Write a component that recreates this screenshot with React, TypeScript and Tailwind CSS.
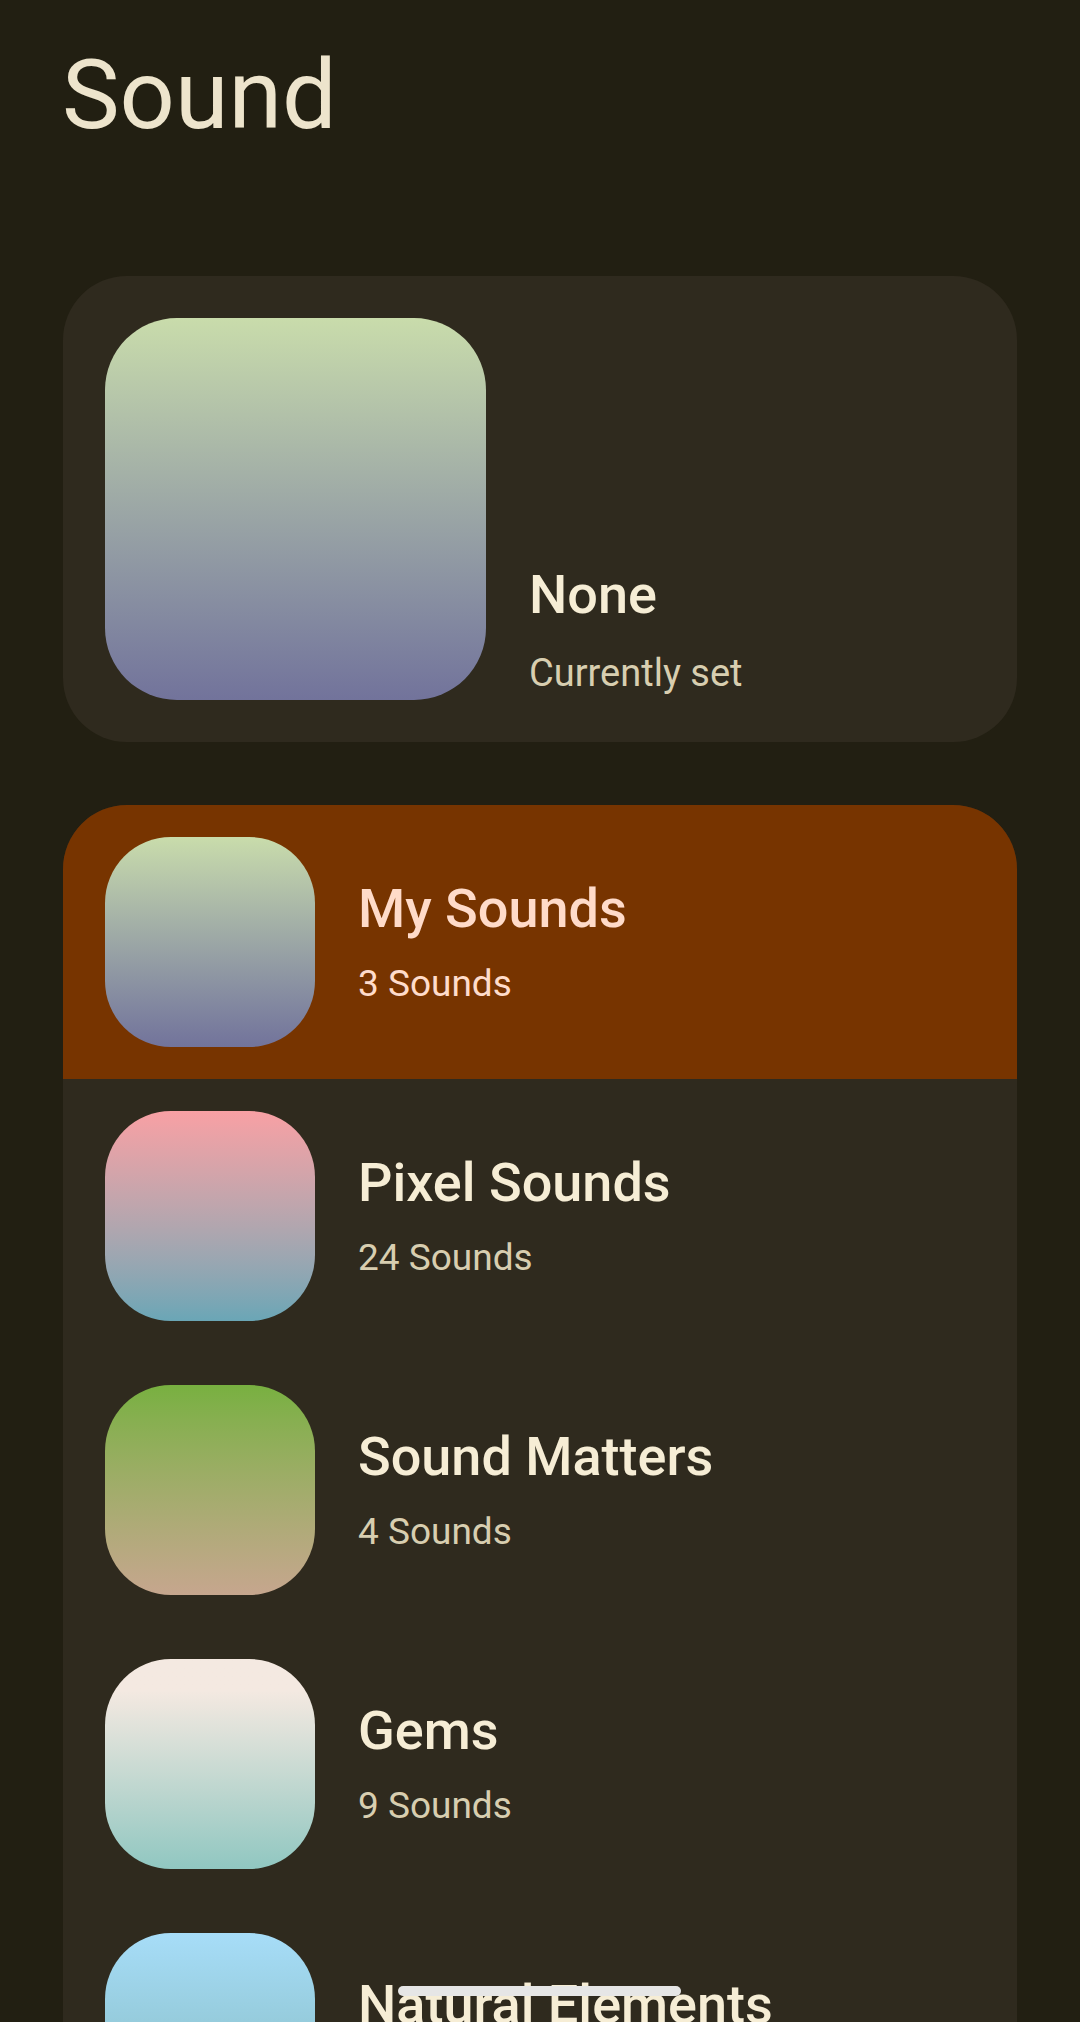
import React from "react";

interface ISoundGroup {
  name: string;
  count: string;
  gradient: string;
  active?: boolean;
}

const groups: ISoundGroup[] = [
  { name: "My Sounds", count: "3 Sounds", gradient: "bg-gradient-to-b from-[#c9dcab] to-[#72739b]", active: true },
  { name: "Pixel Sounds", count: "24 Sounds", gradient: "bg-gradient-to-b from-[#f8a0a4] to-[#6aa6b6]" },
  { name: "Sound Matters", count: "4 Sounds", gradient: "bg-gradient-to-b from-[#78b040] to-[#c6a68e]" },
  { name: "Gems", count: "9 Sounds", gradient: "bg-gradient-to-b from-[#f4e9e1] from-[15%] to-[#90c7c1]" },
  { name: "Natural Elements", count: "12 Sounds", gradient: "bg-gradient-to-b from-[#a7ddf8] to-[#7fb5b8]" },
];

const GroupRow = ({ group }: { group: ISoundGroup }) => {
  return (
    <div className={`flex items-center h-[274px] pl-[42px] ${group.active ? "bg-[#773400]" : ""}`}>
      <div className={`w-[210px] h-[210px] shrink-0 rounded-[66px] ${group.gradient}`} />
      <div className="ml-[43px] flex flex-col">
        <span className={`text-[54px] leading-[60px] font-medium ${group.active ? "text-[#ffdbc9]" : "text-[#f6edd5]"}`}>
          {group.name}
        </span>
        <span className={`mt-[23px] text-[37px] leading-[44px] ${group.active ? "text-[#ffdccb]" : "text-[#d8ceb0]"}`}>
          {group.count}
        </span>
      </div>
    </div>
  );
};

export default function App() {
  return (
    <div className="relative h-[2022px] w-[1080px] overflow-hidden bg-[#221f12] font-[Roboto,sans-serif]">
      <div className="pt-[47px] pl-[62px]">
        <h1 className="text-[97px] leading-[96px] font-normal text-[#ede4cc]">Sound</h1>
      </div>

      <div className="mx-[63px] mt-[133px] flex items-end rounded-[64px] bg-[#2f2a1e] p-[42px]">
        <div className="w-[381px] h-[382px] shrink-0 rounded-[72px] bg-gradient-to-b from-[#c9dcab] to-[#72739b]" />
        <div className="ml-[43px] pb-[5px] flex flex-col">
          <span className="text-[54px] leading-[60px] font-medium text-[#f6edd5]">None</span>
          <span className="mt-[26px] text-[38px] leading-[44px] text-[#d8ceb0]">Currently set</span>
        </div>
      </div>

      <div className="mx-[63px] mt-[63px] overflow-hidden rounded-t-[64px] bg-[#2f2a1e]">
        {groups.map((g) => (
          <GroupRow key={g.name} group={g} />
        ))}
      </div>

      <div className="absolute left-[398px] top-[1986px] h-[10px] w-[283px] rounded-full bg-[#e6e6e6]" />
    </div>
  );
}
